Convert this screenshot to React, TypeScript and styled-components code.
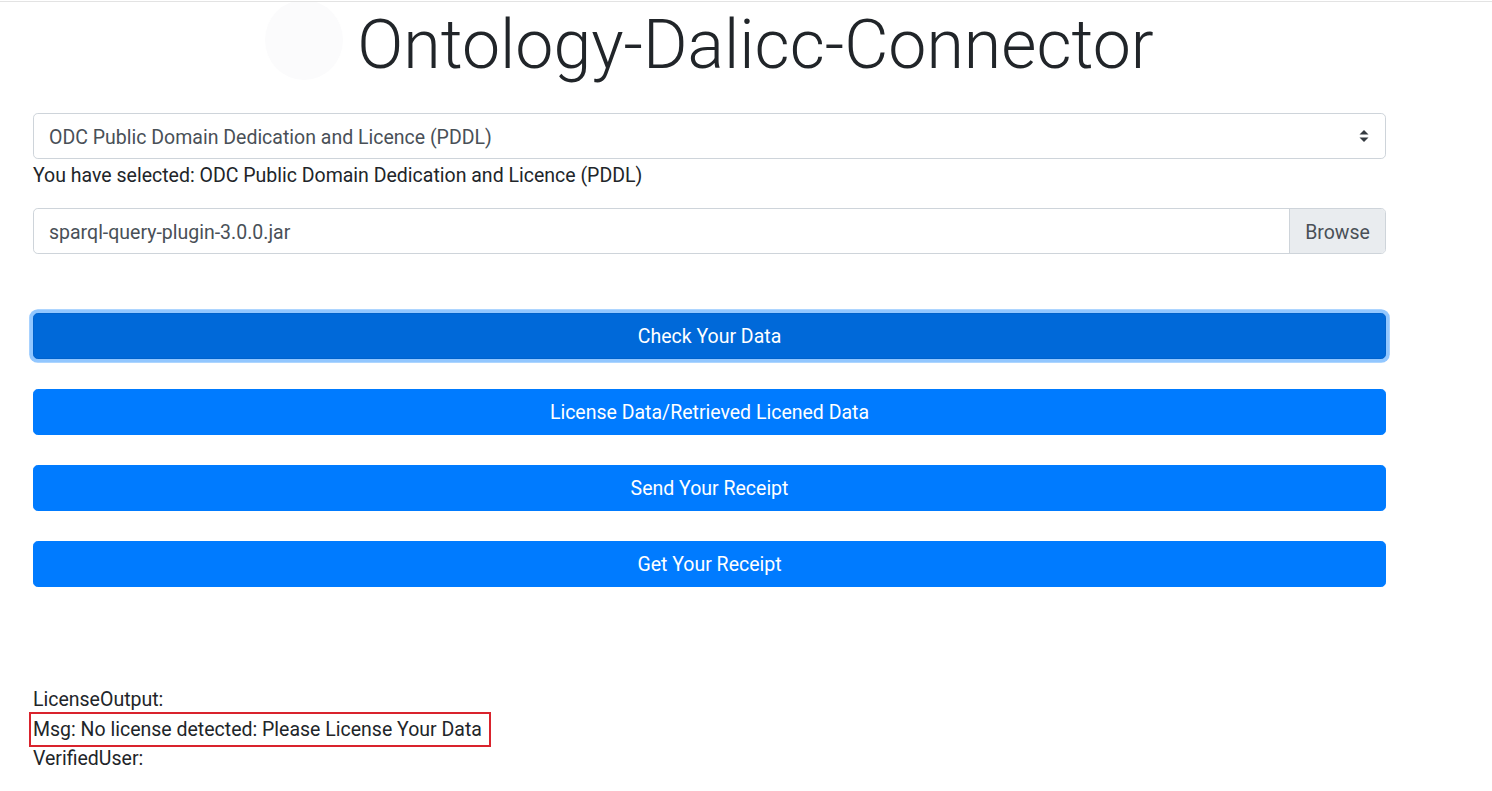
import React from "react";
import styled, { createGlobalStyle } from "styled-components";

const GlobalStyle = createGlobalStyle`
  html, body { margin: 0; padding: 0; background: #fff; }
  body {
    font-family: Roboto, "Liberation Sans", Arial, sans-serif;
    font-size: 19.5px;
    line-height: 1.5;
    color: #212529;
    border-top: 1px solid #e3e3e3;
    margin-top: 1px;
  }
  * { box-sizing: border-box; }
`;

const Page = styled.div`
  width: 1353px;
  margin-left: 33px;
  display: flex;
  flex-direction: column;
`;

const Header = styled.header`
  display: flex;
  align-items: flex-start;
  justify-content: center;
  gap: 14px;
  height: 111px;
`;

const Logo = styled.div`
  width: 78px;
  height: 80px;
  margin-top: -2px;
  border-radius: 50%;
  background: #fbfbfc;
`;

const Title = styled.h1`
  margin: 0;
  font-weight: 300;
  font-size: 68px;
  line-height: 86px;
  color: #212529;
`;

const SelectBox = styled.div`
  position: relative;
  height: 46px;
  border: 1px solid #ced4da;
  border-radius: 4.8px;
  display: flex;
  align-items: center;
  padding: 3px 15px 0;
  color: #495057;
`;

const Arrows = styled.svg`
  position: absolute;
  right: 16px;
  top: 50%;
  transform: translateY(-50%);
`;

const Selected = styled.div`
  line-height: 29px;
  padding-top: 2px;
  margin-bottom: 18px;
`;

const FileRow = styled.div`
  display: flex;
  height: 46px;
  border: 1px solid #ced4da;
  border-radius: 4.8px;
  overflow: hidden;
  color: #495057;
  margin-bottom: 59px;
`;

const FileName = styled.div`
  flex: 1;
  display: flex;
  align-items: center;
  padding: 3px 15px 0;
`;

const Browse = styled.div`
  width: 96px;
  display: flex;
  align-items: center;
  justify-content: center;
  padding-top: 3px;
  background: #e9ecef;
  border-left: 1px solid #ced4da;
`;

const Buttons = styled.div`
  display: flex;
  flex-direction: column;
  gap: 30px;
`;

const Button = styled.button<{ $focused?: boolean }>`
  height: 46px;
  width: 100%;
  padding: 2px 0 0;
  border: 1px solid ${(p) => (p.$focused ? "#0062cc" : "#007bff")};
  background: ${(p) => (p.$focused ? "#0069d9" : "#007bff")};
  color: #fff;
  border-radius: 4.8px;
  font-family: inherit;
  font-size: 19.5px;
  line-height: 1.5;
  box-shadow: ${(p) => (p.$focused ? "0 0 0 3.8px rgba(38,143,255,.5)" : "none")};
  cursor: pointer;
`;

const Output = styled.div`
  margin-top: 98px;
  line-height: 29.5px;
`;

const Boxed = styled.span`
  display: inline-block;
  outline: 2px solid #d9232d;
  outline-offset: 1px;
  padding-right: 6px;
  margin-left: -1px;
  padding-left: 1px;
`;

export default function App() {
  return (
    <>
      <GlobalStyle />
      <Page>
        <Header>
          <Logo />
          <Title>Ontology-Dalicc-Connector</Title>
        </Header>
        <SelectBox>
          ODC Public Domain Dedication and Licence (PDDL)
          <Arrows width="10" height="14" viewBox="0 0 10 14">
            <path d="M5 1 L9.5 5.5 H0.5 Z" fill="#343a40" />
            <path d="M5 13 L9.5 8.5 H0.5 Z" fill="#343a40" />
          </Arrows>
        </SelectBox>
        <Selected>You have selected: ODC Public Domain Dedication and Licence (PDDL)</Selected>
        <FileRow>
          <FileName>sparql-query-plugin-3.0.0.jar</FileName>
          <Browse>Browse</Browse>
        </FileRow>
        <Buttons>
          <Button $focused>Check Your Data</Button>
          <Button>License Data/Retrieved Licened Data</Button>
          <Button>Send Your Receipt</Button>
          <Button>Get Your Receipt</Button>
        </Buttons>
        <Output>
          <div>LicenseOutput:</div>
          <div>
            <Boxed>Msg: No license detected: Please License Your Data</Boxed>
          </div>
          <div>VerifiedUser:</div>
        </Output>
      </Page>
    </>
  );
}
